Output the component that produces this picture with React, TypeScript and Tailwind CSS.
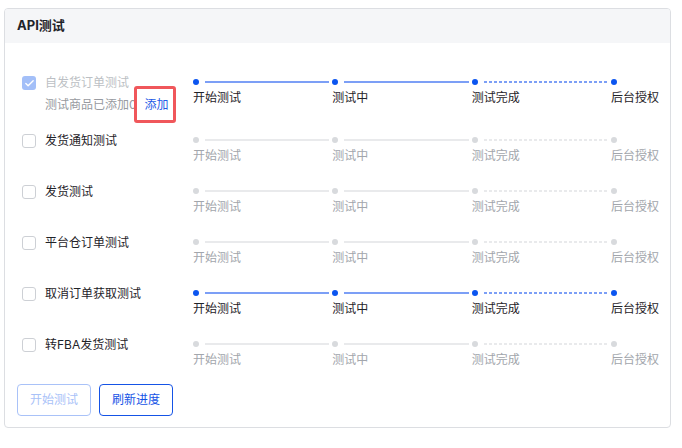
import { Check } from 'lucide-react';

const STEPS = ['开始测试', '测试中', '测试完成', '后台授权'];

interface Row {
    title: string;
    active: boolean;
    checked?: boolean;
    sub?: boolean;
}

const ROWS: Row[] = [
    { title: '自发货订单测试', active: true, checked: true, sub: true },
    { title: '发货通知测试', active: false },
    { title: '发货测试', active: false },
    { title: '平台仓订单测试', active: false },
    { title: '取消订单获取测试', active: true },
    { title: '转FBA发货测试', active: false },
];

const font = { fontFamily: 'Inter, "Noto Sans CJK SC", sans-serif' };

const Steps = ({ active }: { active: boolean }) => {
    const dot = active ? 'bg-[#0b55f0]' : 'bg-[#d8dadd]';
    const label = active ? 'text-[#1f2329]' : 'text-[#a2a6ac]';
    const solid = active ? 'bg-[#7c9ff6]' : 'bg-[#e9eaec]';
    const dashed = active
        ? 'bg-[repeating-linear-gradient(90deg,#7c9ff6_0_3px,transparent_3px_5px)]'
        : 'bg-[repeating-linear-gradient(90deg,#e9eaec_0_3px,transparent_3px_5px)]';

    return (
        <div className="flex flex-1 pt-[6px]">
            {STEPS.map((s, i) => {
                const last = i === STEPS.length - 1;
                return (
                    <div key={s} className={last ? 'flex flex-col' : 'flex flex-1 flex-col'}>
                        <div className="flex h-[6px] items-center">
                            <span className={`h-[6px] w-[6px] shrink-0 rounded-full ${dot}`} />
                            {!last && (
                                <span className={`ml-[6px] mr-[3px] h-[2px] flex-1 ${i === 2 ? dashed : solid}`} />
                            )}
                        </div>
                        <span className={`mt-[3px] text-[12px] leading-[20px] whitespace-nowrap ${label}`}>{s}</span>
                    </div>
                );
            })}
        </div>
    );
};

const Box = ({ checked }: { checked?: boolean }) =>
    checked ? (
        <span className="flex h-[14px] w-[14px] shrink-0 items-center justify-center rounded-[3px] bg-[#a3bff8]">
            <Check className="h-[11px] w-[11px] text-white" strokeWidth={3} />
        </span>
    ) : (
        <span className="h-[14px] w-[14px] shrink-0 rounded-[3px] border border-[#cdd0d5] bg-white" />
    );

export default function App() {
    return (
        <div className="min-h-screen bg-white pt-2 pl-1" style={font}>
            <div className="w-[667px] overflow-hidden rounded-[4px] border border-[#dcdee2] bg-white">
                <div className="flex h-[34px] items-center bg-[#f5f6f8] px-3">
                    <span className="text-[13px] font-bold text-[#1f2329]">API测试</span>
                </div>

                <div className="flex flex-col gap-4 pl-[17px] pr-[11px] pt-[30px]">
                    {ROWS.map(r => (
                        <div key={r.title} className="flex items-start">
                            <div className="flex w-[171px] shrink-0 flex-col">
                                <div className="flex h-[20px] items-center gap-[9px]">
                                    <Box checked={r.checked} />
                                    <span
                                        className={`text-[12px] leading-[20px] ${
                                            r.checked ? 'text-[#bcbfc4]' : 'text-[#1f2329]'
                                        }`}
                                    >
                                        {r.title}
                                    </span>
                                </div>
                                {r.sub && (
                                    <div className="mt-[2px] flex items-center pl-[23px] text-[12px] leading-[20px]">
                                        <span className="text-[#979aa0]">测试商品已添加0</span>
                                        <span className="relative ml-[8px] text-[#2459e6]">
                                            添加
                                            <span className="absolute -left-[11px] -right-[7px] -top-[9px] -bottom-[8px] rounded-[3px] border-[3px] border-[#f0575b]" />
                                        </span>
                                    </div>
                                )}
                            </div>
                            <Steps active={r.active} />
                        </div>
                    ))}
                </div>

                <div className="flex gap-2 px-3 pt-[14px] pb-[11px]">
                    <button
                        disabled
                        className="h-[32px] w-[74px] rounded-[4px] border border-[#a9c2f8] text-[12px] text-[#a9c2f8]"
                    >
                        开始测试
                    </button>
                    <button className="h-[32px] w-[74px] rounded-[4px] border border-[#1553e6] text-[12px] text-[#1553e6]">
                        刷新进度
                    </button>
                </div>
            </div>
        </div>
    );
}
